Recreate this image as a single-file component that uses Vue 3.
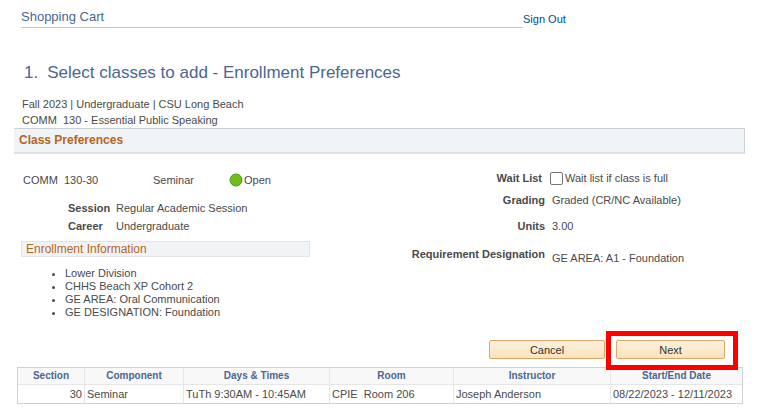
<script setup>
import { ref } from 'vue'

const waitList = ref(false)
const course = 'COMM  130 - Essential Public Speaking'
const section = 'COMM  130-30'
const attributes = [
  'Lower Division',
  'CHHS Beach XP Cohort 2',
  'GE AREA: Oral Communication',
  'GE DESIGNATION: Foundation',
]
const columns = ['Section', 'Component', 'Days & Times', 'Room', 'Instructor', 'Start/End Date']
const meetings = [
  ['30', 'Seminar', 'TuTh 9:30AM - 10:45AM', 'CPIE  Room 206', 'Joseph Anderson', '08/22/2023 - 12/11/2023'],
]
</script>

<template>
  <main class="page">
    <header class="top">
      <div class="cart">Shopping Cart</div>
      <a class="signout" href="#">Sign Out</a>
    </header>

    <h1 class="title"><span class="step">1.</span><span>Select classes to add - Enrollment Preferences</span></h1>

    <div class="context">
      <div>Fall 2023 | Undergraduate | CSU Long Beach</div>
      <div>{{ course }}</div>
    </div>

    <h2 class="band">Class Preferences</h2>

    <div class="details">
      <section class="left">
        <div class="class-row">
          <span>{{ section }}</span>
          <span>Seminar</span>
          <span class="status">
            <svg width="14" height="14" viewBox="0 0 14 14" aria-hidden="true">
              <circle cx="7" cy="7" r="6" fill="#6fbe1e" stroke="#38a010" stroke-width="1" />
            </svg>
            Open
          </span>
        </div>
        <dl class="facts">
          <dt>Session</dt>
          <dd>Regular Academic Session</dd>
          <dt>Career</dt>
          <dd>Undergraduate</dd>
        </dl>
        <h3 class="subband">Enrollment Information</h3>
        <ul class="attributes">
          <li v-for="item in attributes" :key="item">{{ item }}</li>
        </ul>
      </section>

      <section class="right">
        <div class="pref wait">
          <b>Wait List</b>
          <span class="check">
            <input id="wait" v-model="waitList" type="checkbox" />
            <label for="wait">Wait list if class is full</label>
          </span>
        </div>
        <div class="pref grading"><b>Grading</b><span>Graded (CR/NC Available)</span></div>
        <div class="pref units"><b>Units</b><span>3.00</span></div>
        <div class="pref requirement"><b>Requirement Designation</b><span>GE AREA: A1 - Foundation</span></div>
      </section>
    </div>

    <div class="actions">
      <button type="button">Cancel</button>
      <div class="next">
        <button type="button">Next</button>
        <div class="highlight"></div>
      </div>
    </div>

    <table class="meetings">
      <colgroup>
        <col class="c-section" /><col class="c-component" /><col class="c-days" />
        <col class="c-room" /><col class="c-instructor" /><col class="c-date" />
      </colgroup>
      <thead>
        <tr><th v-for="c in columns" :key="c" scope="col">{{ c }}</th></tr>
      </thead>
      <tbody>
        <tr v-for="m in meetings" :key="m[0]"><td v-for="cell in m" :key="cell">{{ cell }}</td></tr>
      </tbody>
    </table>
  </main>
</template>

<style>
body {
  margin: 0;
  background: #fff;
}
</style>

<style scoped>
.page {
  box-sizing: border-box;
  padding: 8px 12px 4px 14px;
  font: 11px/16px "Liberation Sans", Arial, sans-serif;
  color: #4a4a4a;
}
.top {
  display: flex;
  padding-left: 7px;
}
.cart {
  box-sizing: border-box;
  flex: 0 1 502px;
  height: 20px;
  border-bottom: 1px solid #c6c6c6;
  font-size: 13px;
  line-height: 18px;
  color: #4a6694;
}
.signout {
  line-height: 22px;
  color: #004b91;
  text-decoration: none;
}
.title {
  display: flex;
  gap: 9px;
  margin: 33px 0 0 10px;
  font-size: 17px;
  font-weight: 400;
  line-height: 20px;
  color: #4a6694;
}
.context {
  margin-top: 13px;
  padding-left: 8px;
  white-space: pre;
}
.band {
  box-sizing: border-box;
  height: 26px;
  margin: 0;
  padding-left: 5px;
  border: 1px solid #c8d0d8;
  border-left: 0;
  border-bottom: 2px solid #dbe1e5;
  background: #f0f4f7;
  font-size: 12px;
  line-height: 23px;
  color: #b5651d;
}
.details {
  display: flex;
  justify-content: space-between;
  padding: 16px 0 0 7px;
}
.left {
  flex: 0 1 289px;
  padding-top: 2px;
}
.class-row {
  display: grid;
  grid-template-columns: 130px 76px auto;
  padding-left: 2px;
  white-space: pre;
}
.status {
  display: flex;
  align-items: center;
  gap: 1px;
  white-space: normal;
}
.facts {
  display: grid;
  grid-template-columns: 48px 1fr;
  row-gap: 2px;
  margin: 12px 0 0;
  padding-left: 47px;
}
.facts dt {
  font-weight: 700;
}
.facts dd {
  margin: 0;
}
.subband {
  box-sizing: border-box;
  height: 16px;
  margin: 7px 0 0;
  padding-left: 4px;
  border: 1px solid #e0e5e8;
  background: #f0f4f7;
  font-size: 12px;
  font-weight: 400;
  line-height: 14px;
  color: #b5651d;
}
.attributes {
  margin: 10px 0 0;
  padding-left: 44px;
  line-height: 13px;
}
.right {
  flex: 0 1 345px;
}
.pref {
  display: grid;
  grid-template-columns: 145px 1fr;
  column-gap: 7px;
}
.pref b {
  text-align: right;
  white-space: nowrap;
}
.wait {
  grid-template-columns: 142px 1fr;
  column-gap: 8px;
}
.check {
  display: flex;
  align-items: center;
  gap: 2px;
}
.check input {
  box-sizing: border-box;
  appearance: none;
  width: 13px;
  height: 13px;
  margin: 0;
  border: 1px solid #767676;
  border-radius: 2px;
  background: #fff;
}
.check input:checked {
  background: #1a73e8;
}
.grading {
  margin-top: 6px;
}
.units {
  margin-top: 10px;
}
.requirement {
  margin-top: 12px;
}
.requirement span {
  padding-top: 4px;
}
.actions {
  display: flex;
  justify-content: flex-end;
  gap: 11px;
  margin-top: 21px;
  padding-right: 20px;
}
.actions button {
  box-sizing: border-box;
  display: block;
  width: 116px;
  height: 19px;
  padding: 0;
  border: 1px solid #dba668;
  border-radius: 2px;
  background: linear-gradient(#fdf1dc, #fbe3bb);
  font: inherit;
  line-height: 16px;
  color: #333;
}
.next {
  position: relative;
}
.actions .next button {
  width: 109px;
}
.highlight {
  position: absolute;
  inset: -9px -13px -11px -10px;
  border: 5px solid #fe0000;
  pointer-events: none;
}
.meetings {
  width: calc(100% - 5px);
  margin: 8px 0 0 3px;
  border: 1px solid #ced2d8;
  border-collapse: separate;
  border-spacing: 0;
  table-layout: fixed;
}
.c-section { width: 67px; }
.c-component { width: 99px; }
.c-days { width: 146px; }
.c-room { width: 124px; }
.c-instructor { width: 157px; }
.meetings th,
.meetings td {
  padding: 0 2px;
  border-right: 1px solid #e6e6e6;
  white-space: pre;
}
.meetings th:last-child,
.meetings td:last-child {
  border-right: 0;
}
.meetings th {
  height: 16px;
  border-bottom: 1px solid #e6e6e6;
  background: #f8f8f8;
  font-size: 10px;
  line-height: 16px;
  color: #4a6694;
}
.meetings td {
  height: 18px;
  line-height: 18px;
}
.meetings td:first-child {
  text-align: right;
}
</style>
